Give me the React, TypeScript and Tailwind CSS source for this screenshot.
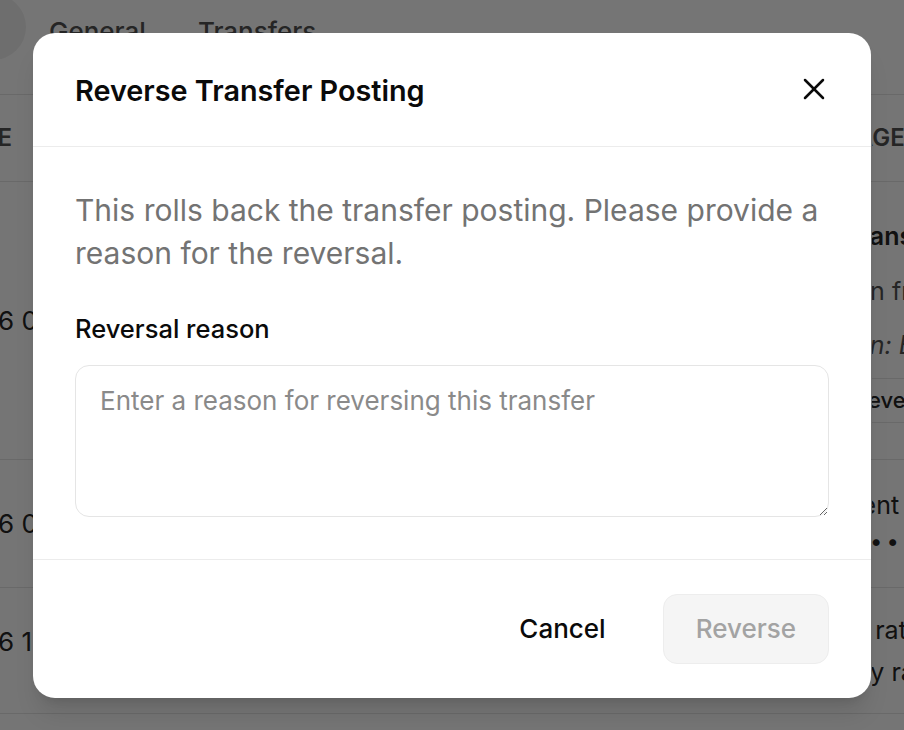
import { X } from "lucide-react";

function PageBehind() {
  return (
    <div className="flex h-full w-full flex-col bg-white text-[#262626]">
      {/* top tabs */}
      <div className="flex h-[95px] items-start border-b border-[#e5e5e5]">
        <div className="-ml-[40px] mt-[-6px] h-[66px] w-[66px] shrink-0 rounded-full bg-[#f0f0f0]" />
        <div className="ml-[23px] flex gap-[52px] pt-[12px] text-[26px] font-medium text-[#525252]">
          <span>General</span>
          <span>Transfers</span>
        </div>
      </div>

      {/* table header */}
      <div className="flex h-[87px] items-center justify-between border-b border-[#e5e5e5] text-[24px] font-semibold uppercase text-[#525252]">
        <div className="w-[33px] overflow-hidden whitespace-nowrap">
          <div className="-ml-[50px]">Date</div>
        </div>
        <div className="w-[32px] overflow-hidden whitespace-nowrap">
          <div className="-ml-[84px]">Message</div>
        </div>
      </div>

      {/* row 1 */}
      <div className="flex h-[278px] justify-between border-b border-[#e5e5e5]">
        <div className="flex w-[33px] items-center overflow-hidden whitespace-nowrap text-[26px]">
          <div className="-ml-[50px]">2026 01/14</div>
        </div>
        <div className="flex w-[32px] flex-col overflow-hidden whitespace-nowrap text-[25px]">
          <div className="-ml-[27px] mt-[36px] font-semibold">Transfer posted</div>
          <div className="-ml-[58px] mt-[17px] text-[#525252]">Taken from savings</div>
          <div className="-ml-[76px] mt-[17px] italic text-[#525252]">Reason: Entered in error</div>
          <div className="-ml-[40px] mt-[13px] flex h-[45px] items-center border-y border-[#e5e5e5] pl-[22px] text-[22px] font-medium">
            Reverse
          </div>
        </div>
      </div>

      {/* row 2 */}
      <div className="flex h-[128px] justify-between border-b border-[#e5e5e5]">
        <div className="flex w-[33px] items-center overflow-hidden whitespace-nowrap text-[26px]">
          <div className="-ml-[50px]">2026 01/09</div>
        </div>
        <div className="flex w-[32px] flex-col overflow-hidden whitespace-nowrap text-[25px]">
          <div className="-ml-[76px] mt-[27px]">Payment</div>
          <div className="-ml-[2px] mt-[0px] text-[22px] tracking-[4px]">•••</div>
        </div>
      </div>

      {/* row 3 */}
      <div className="flex h-[126px] justify-between border-b border-[#e5e5e5]">
        <div className="flex w-[33px] items-center overflow-hidden whitespace-nowrap pb-[18px] text-[26px]">
          <div className="-ml-[50px]">2026 12/30</div>
        </div>
        <div className="flex w-[32px] flex-col overflow-hidden whitespace-nowrap text-[25px]">
          <div className="-ml-[62px] mt-[24px]">Base rate</div>
          <div className="-ml-[46px] mt-[4px]">Daily rate</div>
        </div>
      </div>
    </div>
  );
}

export default function App() {
  return (
    <div className="relative h-[730px] w-[904px] overflow-hidden font-['Inter','Liberation_Sans',sans-serif]">
      <PageBehind />

      <div className="absolute inset-0 flex items-center justify-center bg-black/[0.54]">
        <div className="w-[838px] rounded-[22px] bg-white shadow-xl">
          <div className="flex h-[114px] items-center justify-between border-b border-[#ececec] px-[42px]">
            <h2 className="pt-[3px] text-[28.8px] font-semibold text-[#0a0a0a]">
              Reverse Transfer Posting
            </h2>
            <button className="-mr-[3px] text-[#0a0a0a]">
              <X size={36} strokeWidth={1.7} />
            </button>
          </div>

          <div className="border-b border-[#ececec] px-[42px] pb-[42px] pt-[42px]">
            <p className="text-[30px] leading-[43px] text-[#737373]">
              This rolls back the transfer posting. Please provide a reason for the reversal.
            </p>
            <label
              htmlFor="reason"
              className="mt-[40px] block text-[25.5px] font-medium leading-[28px] text-[#0a0a0a]"
            >
              Reversal reason
            </label>
            <textarea
              id="reason"
              placeholder="Enter a reason for reversing this transfer"
              className="mt-[22px] block h-[152px] w-full rounded-[14px] border-[1.5px] border-[#e5e5e5] px-[24px] py-[17px] text-[26px] leading-[36px] text-[#0a0a0a] outline-none placeholder:text-[#8a8a8a]"
            />
          </div>

          <div className="flex items-center justify-end gap-[26px] px-[42px] py-[34px]">
            <button className="h-[70px] rounded-[14px] px-[31px] text-[26px] font-medium text-[#0a0a0a]">
              Cancel
            </button>
            <button
              disabled
              className="h-[70px] rounded-[14px] border border-[#ededed] bg-[#f5f5f5] px-[32px] text-[26px] font-medium text-[#a3a3a3]"
            >
              Reverse
            </button>
          </div>
        </div>
      </div>
    </div>
  );
}
